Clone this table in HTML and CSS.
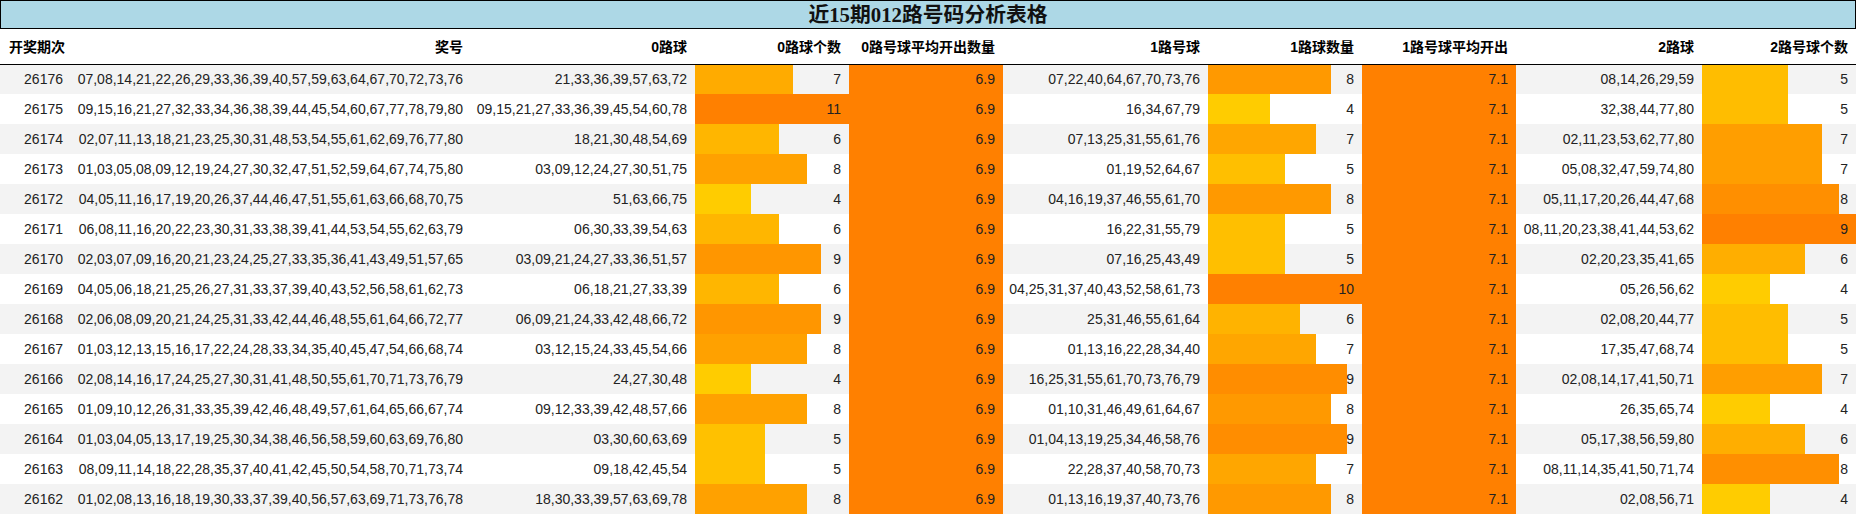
FILE: index.html
```html
<!DOCTYPE html>
<html lang="zh-CN">
<head>
<meta charset="utf-8">
<title>近15期012路号码分析表格</title>
<link rel="stylesheet" href="styles.css">
</head>
<body>
<div class="title">近15期012路号码分析表格</div>
<table class="grid">
<colgroup>
<col class="c-period"><col class="c-nums"><col class="c-r0"><col class="c-bar"><col class="c-bar"><col class="c-r1"><col class="c-bar"><col class="c-bar"><col class="c-r2"><col class="c-bar">
</colgroup>
<thead>
<tr><th class="first">开奖期次</th><th>奖号</th><th>0路球</th><th>0路球个数</th><th>0路号球平均开出数量</th><th>1路号球</th><th>1路球数量</th><th>1路号球平均开出</th><th>2路球</th><th>2路号球个数</th></tr>
</thead>
<tbody>
<tr><td>26176</td><td>07,08,14,21,22,26,29,33,36,39,40,57,59,63,64,67,70,72,73,76</td><td>21,33,36,39,57,63,72</td><td class="bar" style="--w:63.636%;--c:#ffab00">7</td><td class="avg">6.9</td><td>07,22,40,64,67,70,73,76</td><td class="bar" style="--w:80%;--c:#ff9900">8</td><td class="avg">7.1</td><td>08,14,26,29,59</td><td class="bar" style="--w:55.556%;--c:#ffbd00">5</td></tr>
<tr><td>26175</td><td>09,15,16,21,27,32,33,34,36,38,39,44,45,54,60,67,77,78,79,80</td><td>09,15,21,27,33,36,39,45,54,60,78</td><td class="bar" style="--w:100%;--c:#ff8000">11</td><td class="avg">6.9</td><td>16,34,67,79</td><td class="bar" style="--w:40%;--c:#ffcc00">4</td><td class="avg">7.1</td><td>32,38,44,77,80</td><td class="bar" style="--w:55.556%;--c:#ffbd00">5</td></tr>
<tr><td>26174</td><td>02,07,11,13,18,21,23,25,30,31,48,53,54,55,61,62,69,76,77,80</td><td>18,21,30,48,54,69</td><td class="bar" style="--w:54.545%;--c:#ffb600">6</td><td class="avg">6.9</td><td>07,13,25,31,55,61,76</td><td class="bar" style="--w:70%;--c:#ffa600">7</td><td class="avg">7.1</td><td>02,11,23,53,62,77,80</td><td class="bar" style="--w:77.778%;--c:#ff9e00">7</td></tr>
<tr><td>26173</td><td>01,03,05,08,09,12,19,24,27,30,32,47,51,52,59,64,67,74,75,80</td><td>03,09,12,24,27,30,51,75</td><td class="bar" style="--w:72.727%;--c:#ffa100">8</td><td class="avg">6.9</td><td>01,19,52,64,67</td><td class="bar" style="--w:50%;--c:#ffbf00">5</td><td class="avg">7.1</td><td>05,08,32,47,59,74,80</td><td class="bar" style="--w:77.778%;--c:#ff9e00">7</td></tr>
<tr><td>26172</td><td>04,05,11,16,17,19,20,26,37,44,46,47,51,55,61,63,66,68,70,75</td><td>51,63,66,75</td><td class="bar" style="--w:36.364%;--c:#ffcc00">4</td><td class="avg">6.9</td><td>04,16,19,37,46,55,61,70</td><td class="bar" style="--w:80%;--c:#ff9900">8</td><td class="avg">7.1</td><td>05,11,17,20,26,44,47,68</td><td class="bar" style="--w:88.889%;--c:#ff8f00">8</td></tr>
<tr><td>26171</td><td>06,08,11,16,20,22,23,30,31,33,38,39,41,44,53,54,55,62,63,79</td><td>06,30,33,39,54,63</td><td class="bar" style="--w:54.545%;--c:#ffb600">6</td><td class="avg">6.9</td><td>16,22,31,55,79</td><td class="bar" style="--w:50%;--c:#ffbf00">5</td><td class="avg">7.1</td><td>08,11,20,23,38,41,44,53,62</td><td class="bar" style="--w:100%;--c:#ff8000">9</td></tr>
<tr><td>26170</td><td>02,03,07,09,16,20,21,23,24,25,27,33,35,36,41,43,49,51,57,65</td><td>03,09,21,24,27,33,36,51,57</td><td class="bar" style="--w:81.818%;--c:#ff9600">9</td><td class="avg">6.9</td><td>07,16,25,43,49</td><td class="bar" style="--w:50%;--c:#ffbf00">5</td><td class="avg">7.1</td><td>02,20,23,35,41,65</td><td class="bar" style="--w:66.667%;--c:#ffae00">6</td></tr>
<tr><td>26169</td><td>04,05,06,18,21,25,26,27,31,33,37,39,40,43,52,56,58,61,62,73</td><td>06,18,21,27,33,39</td><td class="bar" style="--w:54.545%;--c:#ffb600">6</td><td class="avg">6.9</td><td>04,25,31,37,40,43,52,58,61,73</td><td class="bar" style="--w:100%;--c:#ff8000">10</td><td class="avg">7.1</td><td>05,26,56,62</td><td class="bar" style="--w:44.444%;--c:#ffcc00">4</td></tr>
<tr><td>26168</td><td>02,06,08,09,20,21,24,25,31,33,42,44,46,48,55,61,64,66,72,77</td><td>06,09,21,24,33,42,48,66,72</td><td class="bar" style="--w:81.818%;--c:#ff9600">9</td><td class="avg">6.9</td><td>25,31,46,55,61,64</td><td class="bar" style="--w:60%;--c:#ffb300">6</td><td class="avg">7.1</td><td>02,08,20,44,77</td><td class="bar" style="--w:55.556%;--c:#ffbd00">5</td></tr>
<tr><td>26167</td><td>01,03,12,13,15,16,17,22,24,28,33,34,35,40,45,47,54,66,68,74</td><td>03,12,15,24,33,45,54,66</td><td class="bar" style="--w:72.727%;--c:#ffa100">8</td><td class="avg">6.9</td><td>01,13,16,22,28,34,40</td><td class="bar" style="--w:70%;--c:#ffa600">7</td><td class="avg">7.1</td><td>17,35,47,68,74</td><td class="bar" style="--w:55.556%;--c:#ffbd00">5</td></tr>
<tr><td>26166</td><td>02,08,14,16,17,24,25,27,30,31,41,48,50,55,61,70,71,73,76,79</td><td>24,27,30,48</td><td class="bar" style="--w:36.364%;--c:#ffcc00">4</td><td class="avg">6.9</td><td>16,25,31,55,61,70,73,76,79</td><td class="bar" style="--w:90%;--c:#ff8d00">9</td><td class="avg">7.1</td><td>02,08,14,17,41,50,71</td><td class="bar" style="--w:77.778%;--c:#ff9e00">7</td></tr>
<tr><td>26165</td><td>01,09,10,12,26,31,33,35,39,42,46,48,49,57,61,64,65,66,67,74</td><td>09,12,33,39,42,48,57,66</td><td class="bar" style="--w:72.727%;--c:#ffa100">8</td><td class="avg">6.9</td><td>01,10,31,46,49,61,64,67</td><td class="bar" style="--w:80%;--c:#ff9900">8</td><td class="avg">7.1</td><td>26,35,65,74</td><td class="bar" style="--w:44.444%;--c:#ffcc00">4</td></tr>
<tr><td>26164</td><td>01,03,04,05,13,17,19,25,30,34,38,46,56,58,59,60,63,69,76,80</td><td>03,30,60,63,69</td><td class="bar" style="--w:45.455%;--c:#ffc100">5</td><td class="avg">6.9</td><td>01,04,13,19,25,34,46,58,76</td><td class="bar" style="--w:90%;--c:#ff8d00">9</td><td class="avg">7.1</td><td>05,17,38,56,59,80</td><td class="bar" style="--w:66.667%;--c:#ffae00">6</td></tr>
<tr><td>26163</td><td>08,09,11,14,18,22,28,35,37,40,41,42,45,50,54,58,70,71,73,74</td><td>09,18,42,45,54</td><td class="bar" style="--w:45.455%;--c:#ffc100">5</td><td class="avg">6.9</td><td>22,28,37,40,58,70,73</td><td class="bar" style="--w:70%;--c:#ffa600">7</td><td class="avg">7.1</td><td>08,11,14,35,41,50,71,74</td><td class="bar" style="--w:88.889%;--c:#ff8f00">8</td></tr>
<tr><td>26162</td><td>01,02,08,13,16,18,19,30,33,37,39,40,56,57,63,69,71,73,76,78</td><td>18,30,33,39,57,63,69,78</td><td class="bar" style="--w:72.727%;--c:#ffa100">8</td><td class="avg">6.9</td><td>01,13,16,19,37,40,73,76</td><td class="bar" style="--w:80%;--c:#ff9900">8</td><td class="avg">7.1</td><td>02,08,56,71</td><td class="bar" style="--w:44.444%;--c:#ffcc00">4</td></tr>
</tbody>
</table>
</body>
</html>
```

FILE: styles.css
```css
html, body {
  margin: 0;
  padding: 0;
  background: #ffffff;
}

body {
  width: 1856px;
  font-family: "Liberation Sans", "Noto Sans CJK SC", sans-serif;
  font-size: 14px;
  color: #222222;
}

.title {
  box-sizing: border-box;
  height: 29px;
  border: 1px solid #000000;
  background: #add8e6;
  text-align: center;
  font-family: "Liberation Serif", "Noto Sans CJK SC", serif;
  font-weight: bold;
  font-size: 20.8px;
  line-height: 27px;
  color: #111111;
}

.grid {
  width: 1856px;
  table-layout: fixed;
  border-collapse: collapse;
  border-spacing: 0;
}

.c-period { width: 71px; }
.c-nums { width: 400px; }
.c-r0 { width: 224px; }
.c-bar { width: 154px; }
.c-r1 { width: 205px; }
.c-r2 { width: 186px; }

.grid th {
  height: 35px;
  padding: 0 8px 0 0;
  text-align: right;
  font-weight: bold;
  font-size: 14px;
  color: #000000;
  white-space: nowrap;
  border-bottom: 1px solid #000000;
  background: #ffffff;
  box-sizing: border-box;
}

.grid th.first {
  text-align: left;
  padding: 0 0 0 9px;
}

.grid td {
  height: 30px;
  padding: 0 8px 0 0;
  text-align: right;
  white-space: nowrap;
  box-sizing: border-box;
}

.grid tbody tr:nth-child(odd) {
  background: #f3f3f3;
}

.grid tbody tr:nth-child(even) {
  background: #ffffff;
}

.grid td.bar {
  background: linear-gradient(to right, var(--c) var(--w), transparent var(--w));
}

.grid td.avg {
  background: #ff8000;
}
```
